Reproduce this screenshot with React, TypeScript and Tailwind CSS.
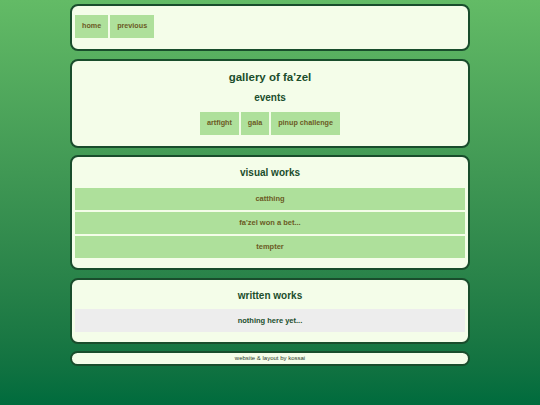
const btn =
  "bg-[#aee09b] px-[7px] h-[23px] flex items-center text-[7.2px] font-bold text-[#6b5a24]";

function Box({ children, className = "" }: { children: React.ReactNode; className?: string }) {
  return (
    <section
      className={`w-[400px] rounded-[8px] border-2 border-[#194d2c] bg-[#f4fde9] ${className}`}
    >
      {children}
    </section>
  );
}

function Row({ label }: { label: string }) {
  return (
    <div className="flex h-[22px] items-center justify-center bg-[#aee09b] text-[7.5px] font-bold text-[#6b5a24]">
      {label}
    </div>
  );
}

export default function App() {
  return (
    <div className="flex min-h-[405px] flex-col items-center bg-gradient-to-b from-[#63bb66] to-[#006b3d] pt-[4px] font-['Liberation_Sans',Arial,sans-serif]">
      <Box className="px-[3px] pt-[9px] pb-[11px]">
        <nav className="flex gap-[2px]">
          <a className={btn}>home</a>
          <a className={btn}>previous</a>
        </nav>
      </Box>

      <Box className="mt-[8px] flex flex-col items-center pt-[9px] pb-[11px]">
        <h1 className="text-[11.5px] leading-[14px] font-bold text-[#1b4d2c]">gallery of fa'zel</h1>
        <h2 className="mt-[8px] text-[10px] leading-[12px] font-bold text-[#1b4d2c]">events</h2>
        <div className="mt-[8px] flex gap-[2px]">
          <a className={btn}>artfight</a>
          <a className={btn}>gala</a>
          <a className={btn}>pinup challenge</a>
        </div>
      </Box>

      <Box className="mt-[7px] px-[3px] pt-[9px] pb-[10px]">
        <h2 className="text-center text-[10px] leading-[14px] font-bold text-[#1b4d2c]">visual works</h2>
        <div className="mt-[8px] flex flex-col gap-[2px]">
          <Row label="catthing" />
          <Row label="fa'zel won a bet..." />
          <Row label="tempter" />
        </div>
      </Box>

      <Box className="mt-[8px] px-[3px] pt-[9px] pb-[10px]">
        <h2 className="text-center text-[10px] leading-[14px] font-bold text-[#1b4d2c]">written works</h2>
        <div className="mt-[6px] flex h-[23px] items-center justify-center bg-[#ededed] text-[7.5px] font-bold text-[#1b4d2c]">
          nothing here yet...
        </div>
      </Box>

      <Box className="mt-[7px] flex h-[15px] items-center justify-center">
        <p className="text-[6px] text-[#2a3a2a]">website &amp; layout by kossai</p>
      </Box>
    </div>
  );
}
